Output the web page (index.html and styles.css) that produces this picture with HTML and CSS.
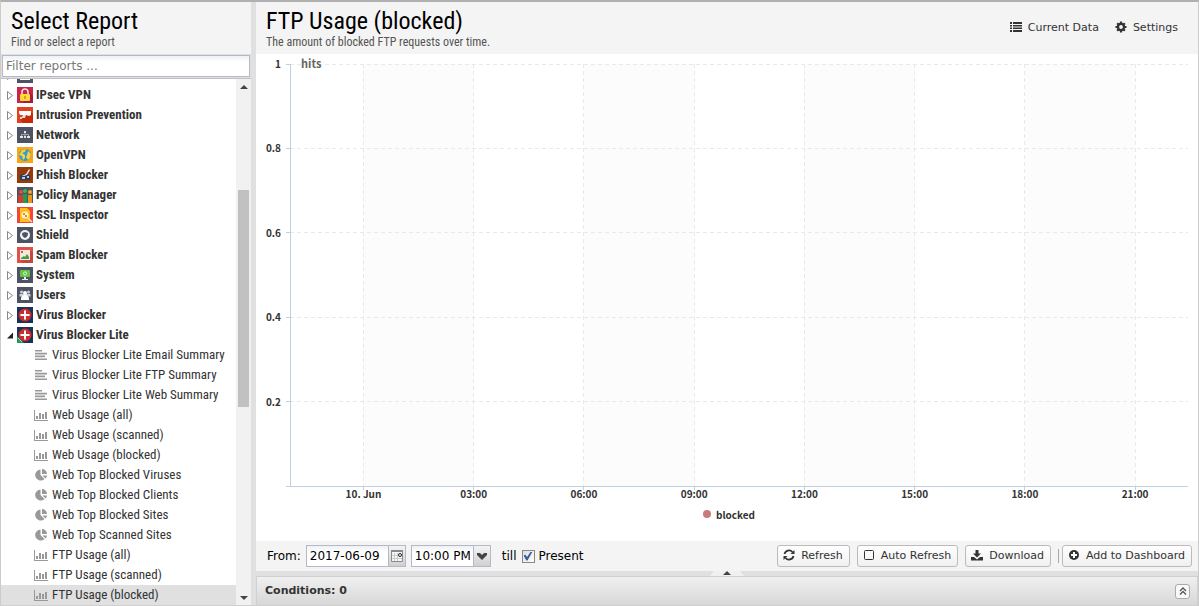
FILE: index.html
```html
<!DOCTYPE html>
<html lang="en">
<head>
    <meta charset="UTF-8">
    <meta name="viewport" content="width=device-width, initial-scale=1.0">
    <title>Reports</title>
    <link rel="stylesheet" href="styles.css">
</head>
<body>
    <svg class="sprite" aria-hidden="true">
        <symbol id="i-hosts" viewBox="0 0 16 16"><rect width="16" height="16" fill="#4d5364"/><path d="M3 12h10v1H3z" fill="#fff"/></symbol>
        <symbol id="i-ipsec" viewBox="0 0 16 16"><rect width="16" height="16" fill="#c9254a"/><path d="M11 4l5 5v7H6z" fill="#a51c3c"/><path d="M5 8V5a3 3 0 0 1 6 0v3" fill="none" stroke="#f3dede" stroke-width="1.600"/><rect x="3" y="7" width="10" height="7" rx="1" fill="#fdd93b"/><path d="M7.500 9h1v3h-1z" fill="#a86a10"/></symbol>
        <symbol id="i-intrusion" viewBox="0 0 16 16"><rect width="16" height="16" fill="#e2401f"/><path d="M14 5l2 2v9H6l-3-4z" fill="#c82a08"/><path d="M2 4h12v4l-2 1-3-1H3L2 6z" fill="#fff"/><path d="M6 8h3l-1 3H5v1H3v-2h2z" fill="#e8dcd8"/></symbol>
        <symbol id="i-network" viewBox="0 0 16 16"><rect width="16" height="16" fill="#4d5364"/><path d="M8 5v5M4.500 10V7.500h7V10" fill="none" stroke="#9aa5a0"/><path d="M7 4h2v2H7zM3 9h3v2H3zM7 9h2v2H7zM10 9h3v2h-3z" fill="#dfe7df"/></symbol>
        <symbol id="i-openvpn" viewBox="0 0 16 16"><rect width="16" height="16" fill="#fba414"/><circle cx="8" cy="8" r="6" fill="#2e9ad6"/><path d="M5 3l4-1-1 3-3 1 3 2 0 3-2 2-1-4-3-1zM11 4l3 3-1 4-2 2-2-3 1-2z" fill="#f9d13c"/></symbol>
        <symbol id="i-phish" viewBox="0 0 16 16"><rect width="16" height="16" fill="#963a0d"/><path d="M3 8l4-1 6 1v5H3z" fill="#2c3c5c"/><path d="M12 2l1 1-3 5-3 1H5l4-2z" fill="#efe8df"/><path d="M5 10h3v2H5zM10 9h2v2h-2z" fill="#b9cbe0"/></symbol>
        <symbol id="i-policy" viewBox="0 0 16 16"><rect width="16" height="16" fill="#4d5364"/><circle cx="4" cy="5" r="2" fill="#e24b3d"/><path d="M1 8h5v8H1z" fill="#d33a31"/><circle cx="8" cy="4" r="2" fill="#35b558"/><path d="M6 7h4v9H6z" fill="#1f9e49"/><circle cx="13" cy="5" r="2" fill="#f5a623"/><path d="M11 8h4v8h-4z" fill="#ee9418"/></symbol>
        <symbol id="i-ssl" viewBox="0 0 16 16"><rect width="16" height="16" fill="#ef4836"/><path d="M3 1h7l3 3v11H3z" fill="#fdbc1c"/><circle cx="8" cy="8" r="3.500" fill="#fff1c8"/><path d="M6 6h2v2H6zM8 8h2v2H8z" fill="#f0871a"/><path d="M11 11l4 4" stroke="#f7e3d2" stroke-width="1.500"/></symbol>
        <symbol id="i-shield" viewBox="0 0 16 16"><rect width="16" height="16" fill="#4d5364"/><circle cx="8" cy="8" r="5" fill="#f2f2f2"/><path d="M5 6l3-1 3 1c0 3-1 4-3 5-2-1-3-2-3-5z" fill="#4d5364"/></symbol>
        <symbol id="i-spam" viewBox="0 0 16 16"><rect width="16" height="16" fill="#df5149"/><path d="M14 4l2 2v10H6l-3-3z" fill="#c9463f"/><rect x="3" y="3" width="10" height="10" fill="#f4e9dc"/><path d="M4 12V11l3-2 1 1 2-3 2 3v2z" fill="#3f9d46"/><path d="M4 4h2v2H4z" fill="#df5149"/></symbol>
        <symbol id="i-system" viewBox="0 0 16 16"><rect width="16" height="16" fill="#4d5364"/><rect x="3" y="3" width="10" height="7" rx="1" fill="#65c548"/><path d="M7 10h2v2h2v1H5v-1h2z" fill="#e5eee3"/><circle cx="8" cy="6.500" r="1.600" fill="none" stroke="#d9f3cf"/></symbol>
        <symbol id="i-users" viewBox="0 0 16 16"><rect width="16" height="16" fill="#4d5364"/><circle cx="4.500" cy="5" r="1.500" fill="#cdd0d6"/><circle cx="11.500" cy="5" r="1.500" fill="#cdd0d6"/><path d="M2.500 7h11v2.500h-11z" fill="#cdd0d6"/><circle cx="8" cy="6" r="2" fill="#fff"/><path d="M4 12q0-4 4-4t4 4v1H4z" fill="#fff"/></symbol>
        <symbol id="i-virus" viewBox="0 0 16 16"><rect width="16" height="16" fill="#17335a"/><circle cx="8" cy="8" r="6.500" fill="#cf2a2c"/><path d="M7 3.500h2V7h3.500v2H9v3.500H7V9H3.500V7H7z" fill="#fff"/></symbol>
        <symbol id="i-virus-lite" viewBox="0 0 16 16"><use href="#i-virus"/><path d="M0 9l7 7H0z" fill="#259a5d"/><path d="M1 11l4 4" stroke="#9be0b5"/></symbol>
        <symbol id="i-text" viewBox="0 0 14 14"><path d="M1 2h7v1.600H1zM1 4.800h12v1.600H1zM1 7.600h10v1.600H1zM1 10.400h12V12H1z" fill="currentColor"/></symbol>
        <symbol id="i-bars" viewBox="0 0 14 14"><path d="M0 2h1v10h13v1H0zM2 8h2v3H2zM5 5h2v6H5zM8 6h2v5H8zM11 4h2v7h-2z" fill="currentColor"/></symbol>
        <symbol id="i-pie" viewBox="0 0 14 14"><path d="M6.500 1.500V7l4 4a5.500 5.500 0 1 1-4-9.500zM8 1a5 5 0 0 1 5 5H8zM8.500 7.500H13a5 5 0 0 1-1.500 3z" fill="currentColor"/></symbol>
        <symbol id="i-closed" viewBox="0 0 6 9"><path d="M.5.5l5 4-5 4z" fill="#fff" stroke="#888"/></symbol>
        <symbol id="i-open" viewBox="0 0 6 6"><path d="M6 0v6H0z" fill="#222"/></symbol>
        <symbol id="i-list" viewBox="0 0 12 10"><path d="M0 0h2v2H0zM3 0h9v2H3zM0 3h2v1.500H0zM3 3h9v1.500H3zM0 5.500h2V7H0zM3 5.500h9V7H3zM0 8h2v2H0zM3 8h9v2H3z" fill="currentColor"/></symbol>
        <symbol id="i-gear" viewBox="0 0 12 12"><circle cx="6" cy="6" r="3" fill="none" stroke="currentColor" stroke-width="2.400"/><path d="M6 .5v11M.5 6h11M2.200 2.200l7.600 7.600M9.800 2.200L2.200 9.800" stroke="currentColor" stroke-width="2.200"/><circle cx="6" cy="6" r="1.900" fill="#f4f4f4"/></symbol>
        <symbol id="i-refresh" viewBox="0 0 12 12"><path d="M1.500 5A4.600 4.600 0 0 1 9.500 3M10.500 7A4.600 4.600 0 0 1 2.500 9" fill="none" stroke="currentColor" stroke-width="1.800"/><path d="M11.500 1v4h-4zM.5 11V7h4z" fill="currentColor"/></symbol>
        <symbol id="i-box" viewBox="0 0 12 12"><rect x="1.500" y="1.500" width="9" height="9" rx="1" fill="none" stroke="currentColor"/></symbol>
        <symbol id="i-download" viewBox="0 0 12 12"><path d="M4.500 1h3v3.500H10l-4 4-4-4h2.500z" fill="currentColor"/><path d="M0 8h3l3 2.500L9 8h3v3.500H0z" fill="currentColor"/></symbol>
        <symbol id="i-plus" viewBox="0 0 12 12"><circle cx="6" cy="6" r="5" fill="currentColor"/><path d="M5 3h2v2h2v2H7v2H5V7H3V5h2z" fill="#fff"/></symbol>
        <symbol id="i-calendar" viewBox="0 0 12 12"><path d="M.5.5h11v11H.5z" fill="#f6f6f6" stroke="#8a8a8a"/><path d="M0 0h12v2H0z" fill="#8a8a8a"/><path d="M3.500 3v8M6.500 3v8M1 5.500h10M1 8.500h10" stroke="#ccc"/><circle cx="9" cy="5" r="1.500" fill="#fff" stroke="#222"/></symbol>
        <symbol id="i-chevron" viewBox="0 0 10 7"><path d="M0 0h3l2 2 2-2h3v2L5 7 0 2z" fill="#444"/></symbol>
        <symbol id="i-expand" viewBox="0 0 8 8"><path d="M1 4l3-3 3 3M1 7.500l3-3 3 3" fill="none" stroke="#555" stroke-width="1.300"/></symbol>
        <symbol id="i-up" viewBox="0 0 8 4"><path d="M4 0l4 4H0z" fill="#444"/></symbol>
        <symbol id="i-down" viewBox="0 0 8 4"><path d="M0 0h8L4 4z" fill="#444"/></symbol>
    </svg>

    <div class="app">
        <aside class="sidebar">
            <header class="panel-header">
                <h1>Select Report</h1>
                <p>Find or select a report</p>
            </header>
            <div class="filter">
                <input type="text" placeholder="Filter reports ..." aria-label="Filter reports">
            </div>
            <div class="tree-wrap">
                <ul class="tree" id="tree"></ul>
                <div class="scrollbar">
                    <button aria-label="Scroll up"><svg width="8" height="4"><use href="#i-up"/></svg></button>
                    <div class="track"><div class="thumb"></div></div>
                    <button aria-label="Scroll down"><svg width="8" height="4"><use href="#i-down"/></svg></button>
                </div>
            </div>
        </aside>

        <main class="main">
            <header class="panel-header report-header">
                <div class="report-title">
                    <h2>FTP Usage (blocked)</h2>
                    <p>The amount of blocked FTP requests over time.</p>
                </div>
                <button class="link-btn"><svg width="12" height="10"><use href="#i-list"/></svg>Current Data</button>
                <button class="link-btn"><svg width="12" height="12"><use href="#i-gear"/></svg>Settings</button>
            </header>

            <section class="chart">
                <svg class="plot" id="plot"></svg>
                <div class="legend"><span class="dot"></span>blocked</div>
            </section>

            <div class="toolbar">
                <label for="from-date">From:</label>
                <div class="field date-field">
                    <input type="text" id="from-date" value="2017-06-09">
                    <button class="trigger" aria-label="Pick date"><svg width="12" height="12"><use href="#i-calendar"/></svg></button>
                </div>
                <div class="field time-field">
                    <select aria-label="Time"><option>10:00 PM</option></select>
                    <span class="trigger"><svg width="10" height="7"><use href="#i-chevron"/></svg></span>
                </div>
                <span>till</span>
                <label class="present"><input type="checkbox" checked>Present</label>
                <div class="actions">
                    <button class="btn"><svg width="12" height="12"><use href="#i-refresh"/></svg>Refresh</button>
                    <button class="btn"><svg width="12" height="12"><use href="#i-box"/></svg>Auto Refresh</button>
                    <button class="btn"><svg width="12" height="12"><use href="#i-download"/></svg>Download</button>
                    <span class="separator"></span>
                    <button class="btn"><svg width="12" height="12"><use href="#i-plus"/></svg>Add to Dashboard</button>
                </div>
            </div>

            <div class="splitter"><button class="collapse" aria-label="Expand conditions"><svg width="8" height="4"><use href="#i-up"/></svg></button></div>

            <footer class="conditions">
                <h3>Conditions: 0</h3>
                <button aria-label="Expand"><svg width="8" height="8"><use href="#i-expand"/></svg></button>
            </footer>
        </main>
    </div>

    <script src="app.js"></script>
</body>
</html>
```
FILE: styles.css
```css
* {
    box-sizing: border-box;
}
body {
    margin: 0;
    font-family: "DejaVu Sans", sans-serif;
    font-size: 12px;
    color: #000;
    background-color: #e0e0e0;
}
h1, h2, h3, p, ul {
    margin: 0;
    padding: 0;
}
button {
    margin: 0;
    padding: 0;
    border: none;
    background: none;
    font-family: inherit;
    color: #333;
    cursor: pointer;
}
svg {
    flex: none;
}
.sprite {
    position: absolute;
    width: 0;
    height: 0;
}
.app {
    display: flex;
    gap: 5px;
    height: 100vh;
    border: 1px solid #ccc;
    border-top: 2px solid #b0b0b0;
    border-bottom-color: #d0d0d0;
}

/* headers */
.panel-header {
    height: 52px;
    flex: none;
    padding: 6px 10px 0;
    background-color: #f4f4f4;
    font-family: "Roboto Condensed", "Liberation Sans Narrow", Roboto, sans-serif;
}
.panel-header h1,
.panel-header h2 {
    font-size: 24px;
    line-height: 26px;
    font-weight: 400;
}
.panel-header p {
    font-size: 12px;
    line-height: 16px;
    color: #555;
}

/* sidebar */
.sidebar {
    width: 250px;
    flex: none;
    display: flex;
    flex-direction: column;
}
.filter {
    padding: 1px;
    border-bottom: 1px solid #c0c0c0;
}
.filter input {
    display: block;
    width: 100%;
    height: 22px;
    padding: 0 3px;
    border: 1px solid #b5b8c8;
    background: linear-gradient(#eef1f2, #fff 6px);
    font-family: inherit;
    font-size: 12px;
}
.filter input::placeholder {
    color: #777;
}
.tree-wrap {
    flex: 1;
    min-height: 0;
    display: flex;
    background-color: #fff;
}
.tree {
    flex: 1;
    display: flex;
    flex-direction: column;
    justify-content: flex-end;
    overflow: hidden;
    list-style: none;
    font-family: "Roboto Condensed", "Liberation Sans Narrow", Roboto, sans-serif;
    font-size: 13px;
}
.tree a {
    display: flex;
    align-items: center;
    height: 20px;
    color: #333;
    text-decoration: none;
    white-space: nowrap;
}
.tree span {
    padding-bottom: 2px;
}
.tree .group {
    padding-left: 6px;
    font-weight: 700;
    gap: 3px;
}
.tree .arrow {
    width: 6px;
    height: 9px;
    margin-right: 1px;
}
.tree .leaf {
    padding-left: 33px;
    gap: 4px;
}
.tree .leaf svg {
    color: #999;
}
.tree .selected {
    background-color: #e0e0e0;
}
.scrollbar {
    width: 15px;
    display: flex;
    flex-direction: column;
    background-color: #f1f1f1;
}
.scrollbar button {
    height: 15px;
    display: flex;
    align-items: center;
    justify-content: center;
}
.track {
    flex: 1;
    display: flex;
    flex-direction: column;
    padding: 0 2px;
}
.track::before {
    content: "";
    flex: 96;
}
.track::after {
    content: "";
    flex: 183;
}
.thumb {
    flex: 217;
    background-color: #c1c1c1;
}

/* report */
.main {
    flex: 1;
    min-width: 0;
    display: flex;
    flex-direction: column;
}
.report-header {
    display: flex;
    align-items: flex-start;
}
.report-title {
    flex: 1;
}
.link-btn {
    display: flex;
    align-items: center;
    gap: 6px;
    height: 38px;
    margin: 0 10px 0 6px;
    font-family: "DejaVu Sans", sans-serif;
    font-size: 11px;
}
.chart {
    flex: 1;
    min-height: 0;
    display: flex;
    flex-direction: column;
    padding: 10px 10px 0 34px;
    background-color: #fff;
    font-family: "Noto Sans CJK SC", sans-serif;
    font-size: 10px;
    font-weight: 700;
    color: #333;
}
.plot {
    flex: 1;
    width: 100%;
    min-height: 0;
    overflow: visible;
}
.plot text {
    fill: #333;
}
.plot .axis-title {
    fill: #666;
    font-size: 11px;
}
.plot line {
    shape-rendering: crispEdges;
}
.plot .band {
    fill: #fcfcfc;
}
.plot .grid {
    stroke: #e9e9e9;
    stroke-dasharray: 4 3;
}
.plot .axis {
    stroke: #c0d0e0;
}
.legend {
    display: flex;
    align-items: center;
    justify-content: center;
    gap: 5px;
    height: 16px;
    margin: 20px 20px 19px 0;
}
.dot {
    width: 8px;
    height: 8px;
    border-radius: 50%;
    background-color: #c87b7b;
}

/* toolbar */
.toolbar {
    display: flex;
    align-items: center;
    height: 30px;
    padding: 0 6px 0 11px;
    gap: 5px;
    background-color: #f4f4f4;
}
.field {
    position: relative;
    display: flex;
    height: 22px;
    border: 1px solid #b5b8c8;
    background: linear-gradient(#eef1f2, #fff 6px);
}
.field input,
.field select {
    appearance: none;
    flex: 1;
    min-width: 0;
    padding: 0 3px;
    border: none;
    border-radius: 0;
    background: none;
    overflow: hidden;
    font-family: inherit;
    font-size: 12px;
    color: #000;
}
.date-field {
    width: 100px;
}
.time-field {
    width: 80px;
    margin-right: 6px;
}
.trigger {
    width: 17px;
    display: flex;
    align-items: center;
    justify-content: center;
    border-left: 1px solid #b5b8c8;
    background: linear-gradient(#f4f4f4, #d0d0d0);
    pointer-events: none;
}
.present {
    display: flex;
    align-items: center;
    gap: 4px;
}
.present input {
    appearance: none;
    width: 13px;
    height: 13px;
    margin: 0;
    border: 1px solid #888;
    background: linear-gradient(135deg, #ddd, #fff);
}
.present input:checked::before {
    content: "";
    display: block;
    width: 9px;
    height: 9px;
    margin: 1px;
    background-color: #3f5c9c;
    clip-path: polygon(0 45%, 22% 35%, 40% 62%, 80% 0, 100% 0, 45% 100%, 32% 100%);
}
.actions {
    display: flex;
    align-items: center;
    gap: 7px;
    margin-left: auto;
}
.btn {
    display: flex;
    align-items: center;
    gap: 6px;
    height: 22px;
    padding: 0 6px 2px 5px;
    border: 1px solid #bbb;
    border-radius: 3px;
    background: linear-gradient(#fff, #f0f0f0);
    font-size: 11px;
    white-space: nowrap;
}
.separator {
    width: 1px;
    height: 14px;
    margin-right: -4px;
    background-color: #aca899;
}
.splitter {
    display: flex;
    justify-content: center;
    height: 5px;
}
.collapse {
    display: flex;
    justify-content: center;
    width: 34px;
    background-color: #f0f0f0;
    clip-path: polygon(4px 0, 30px 0, 100% 100%, 0 100%);
}
.conditions {
    display: flex;
    align-items: center;
    justify-content: space-between;
    height: 29px;
    padding: 0 7px 0 8px;
    border: 1px solid #d0d0d0;
    border-bottom: none;
    background: linear-gradient(#f0f0f0, #d7d7d7);
}
.conditions h3 {
    padding-bottom: 2px;
    font-size: 11px;
    color: #333;
}
.conditions button {
    display: flex;
    align-items: center;
    justify-content: center;
    width: 15px;
    height: 15px;
    border: 1px solid #aaa;
    border-radius: 3px;
    background-color: #f8f8f8;
}
```
FILE: app.js
```js
const groups = [
    ['Hosts', 'hosts'],
    ['IPsec VPN', 'ipsec'],
    ['Intrusion Prevention', 'intrusion'],
    ['Network', 'network'],
    ['OpenVPN', 'openvpn'],
    ['Phish Blocker', 'phish'],
    ['Policy Manager', 'policy'],
    ['SSL Inspector', 'ssl'],
    ['Shield', 'shield'],
    ['Spam Blocker', 'spam'],
    ['System', 'system'],
    ['Users', 'users'],
    ['Virus Blocker', 'virus'],
    ['Virus Blocker Lite', 'virus-lite', true]
];

const reports = [
    ['Virus Blocker Lite Email Summary', 'text'],
    ['Virus Blocker Lite FTP Summary', 'text'],
    ['Virus Blocker Lite Web Summary', 'text'],
    ['Web Usage (all)', 'bars'],
    ['Web Usage (scanned)', 'bars'],
    ['Web Usage (blocked)', 'bars'],
    ['Web Top Blocked Viruses', 'pie'],
    ['Web Top Blocked Clients', 'pie'],
    ['Web Top Blocked Sites', 'pie'],
    ['Web Top Scanned Sites', 'pie'],
    ['FTP Usage (all)', 'bars'],
    ['FTP Usage (scanned)', 'bars'],
    ['FTP Usage (blocked)', 'bars', true]
];

const icon = (name, size) => `<svg width="${size}" height="${size}"><use href="#i-${name}"/></svg>`;

document.getElementById('tree').innerHTML =
    groups.map(([text, name, open]) =>
        `<li><a href="#" class="group"><svg class="arrow"><use href="#i-${open ? 'open' : 'closed'}"/></svg>${icon(name, 16)}<span>${text}</span></a></li>`
    ).join('') +
    reports.map(([text, name, selected]) =>
        `<li><a href="#" class="leaf${selected ? ' selected' : ''}">${icon(name, 14)}<span>${text}</span></a></li>`
    ).join('');

// x axis runs from 22:00 to a little past 22:00 the next day
const hours = 24.44;
const times = ['10. Jun', '03:00', '06:00', '09:00', '12:00', '15:00', '18:00', '21:00'];
const xAt = i => (2 + i * 3) / hours * 100;

let plot = '';
times.forEach((label, i) => {
    // every other interval is shaded
    if (i % 2 === 0) {
        plot += `<rect class="band" x="${xAt(i)}%" y="0" width="${3 / hours * 100}%" height="100%"/>`;
    }
});
times.forEach((label, i) => {
    const x = xAt(i) + '%';
    plot += `<line class="grid" x1="${x}" x2="${x}" y1="0" y2="100%"/>`;
    plot += `<svg x="${x}" y="100%" overflow="visible"><line class="axis" y2="4"/><text y="12" text-anchor="middle">${label}</text></svg>`;
});
[1, 0.8, 0.6, 0.4, 0.2].forEach(value => {
    const y = (1 - value) * 100 + '%';
    plot += `<line class="grid" x1="0" x2="100%" y1="${y}" y2="${y}"/>`;
    plot += `<svg y="${y}" overflow="visible"><line class="axis" x1="-4"/><text x="-9" y="4" text-anchor="end">${value}</text></svg>`;
});
plot += '<line class="axis" x1="0" x2="0" y1="0" y2="100%"/>';
plot += '<line class="axis" x1="-4" x2="100%" y1="100%" y2="100%"/>';
plot += '<text class="axis-title" x="11" y="4">hits</text>';
document.getElementById('plot').innerHTML = plot;
```
